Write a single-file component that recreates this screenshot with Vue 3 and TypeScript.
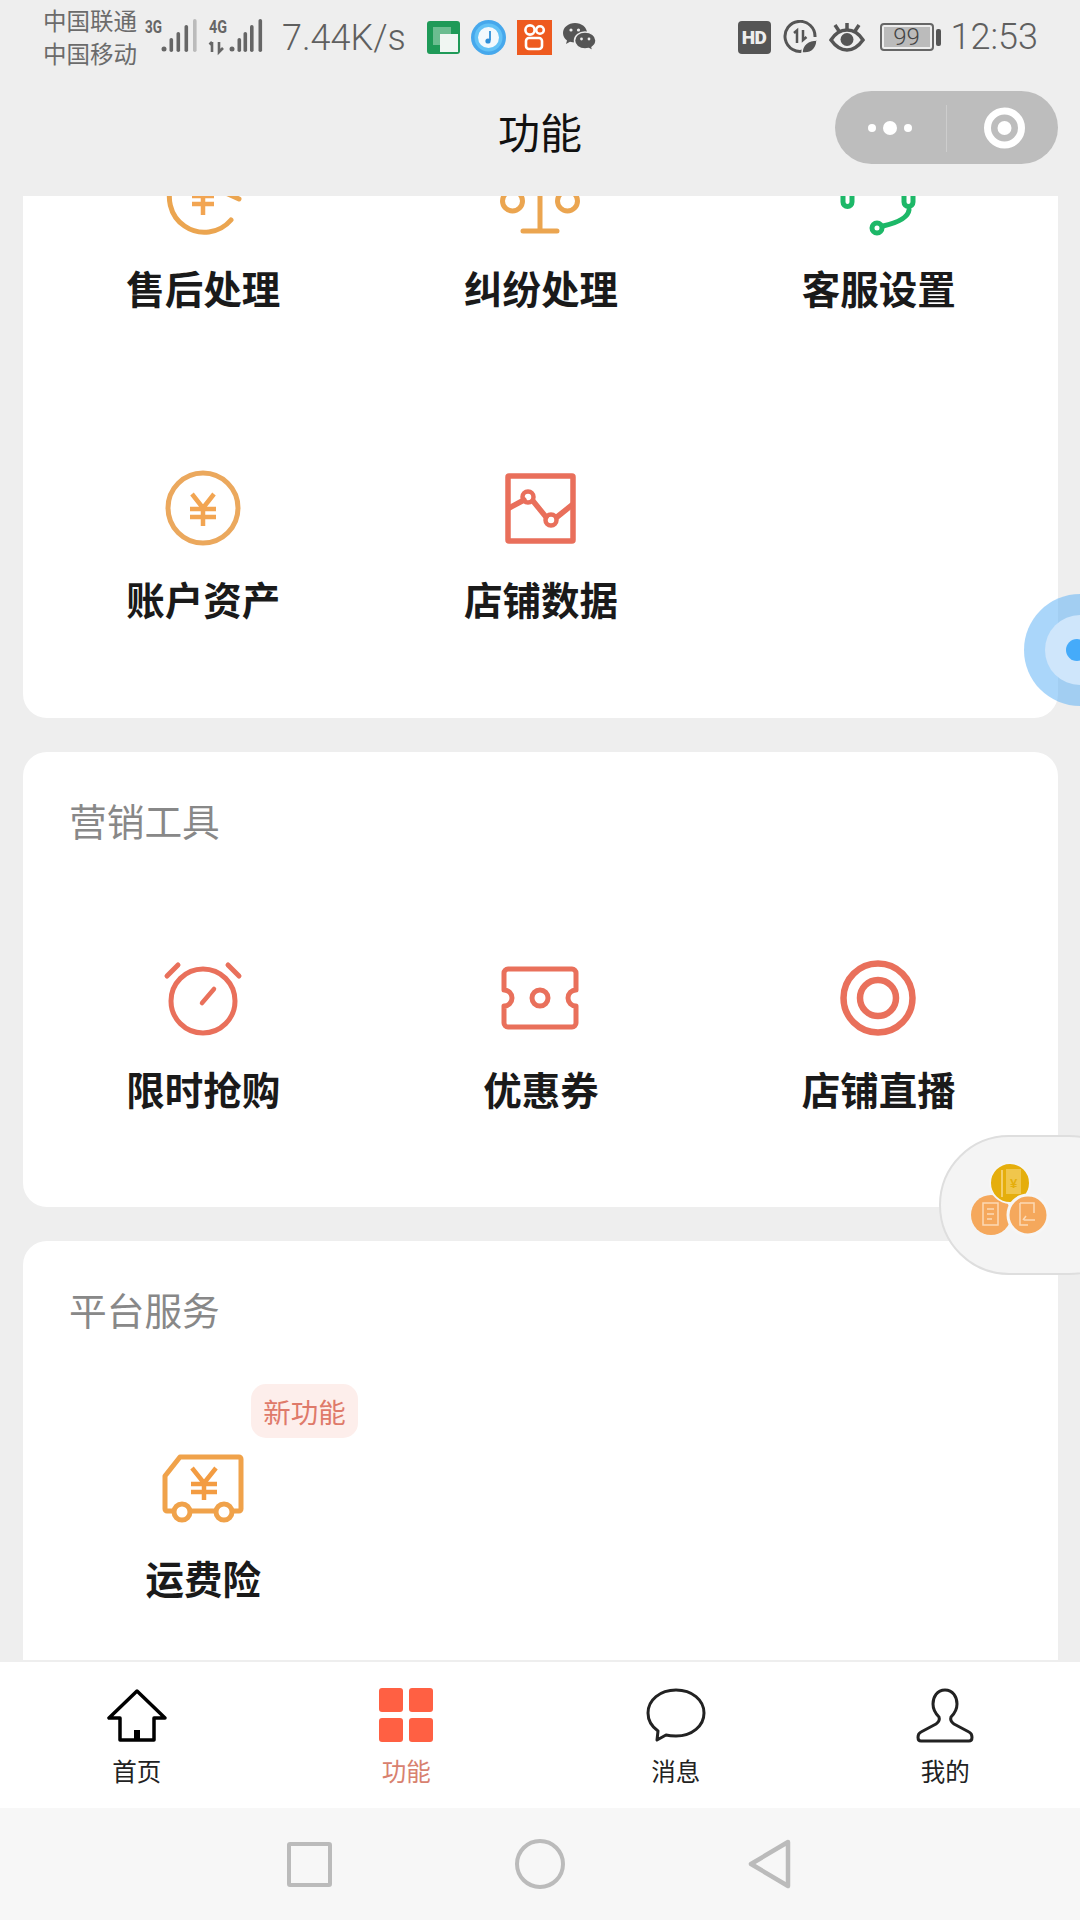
<template>
  <div class="page">
    <div class="status">
      <div class="carrier">
        <div>中国联通</div>
        <div>中国移动</div>
      </div>
      <svg class="signal-a" width="54" height="44" viewBox="0 0 54 44">
        <text x="1" y="19" class="net" textLength="17" lengthAdjust="spacingAndGlyphs">3G</text>
        <circle cx="20" cy="35" r="2.5" fill="#666" />
        <rect x="25.5" y="24" width="3.6" height="14" rx="1.8" fill="#666" />
        <rect x="32.5" y="18" width="3.6" height="20" rx="1.8" fill="#666" />
        <rect x="40.5" y="11" width="3.6" height="27" rx="1.8" fill="#666" />
        <rect x="49" y="5" width="3.6" height="33" rx="1.8" fill="#bbb" />
      </svg>
      <svg class="signal-b" width="56" height="44" viewBox="0 0 56 44">
        <text x="1" y="19" class="net" textLength="18" lengthAdjust="spacingAndGlyphs">4G</text>
        <path d="M4 38V28M1.500 30.500 4 28M11 28v10l4-4" fill="none" stroke="#666" stroke-width="2.600" />
        <circle cx="24" cy="35" r="2.5" fill="#666" />
        <rect x="29.5" y="24" width="3.6" height="14" rx="1.8" fill="#666" />
        <rect x="35.5" y="18" width="3.6" height="20" rx="1.8" fill="#666" />
        <rect x="42" y="11" width="3.6" height="27" rx="1.8" fill="#666" />
        <rect x="50.5" y="5" width="3.6" height="33" rx="1.8" fill="#666" />
      </svg>
      <span class="speed">7.44K/s</span>
      <div class="apps">
        <svg width="33" height="33" viewBox="0 0 33 33">
          <rect width="33" height="33" rx="3" fill="#1f9a58" />
          <rect x="6" y="6" width="18" height="18" fill="#6bbd90" />
          <rect x="13" y="13" width="18" height="18" fill="#f0f6f2" />
        </svg>
        <svg width="35" height="35" viewBox="0 0 35 35">
          <circle cx="17.5" cy="17.5" r="17.5" fill="#46a8ec" />
          <circle cx="17.5" cy="17.5" r="14" fill="#62c2f6" />
          <circle cx="17.5" cy="17.5" r="10.5" fill="#f2f9fd" />
          <path d="M19 11v9.5" stroke="#2f8fd8" stroke-width="1.8" />
          <circle cx="17" cy="21" r="2.6" fill="#2f8fd8" />
        </svg>
        <svg width="35" height="35" viewBox="0 0 35 35">
          <rect width="35" height="35" fill="#ee5a1f" />
          <g fill="none" stroke="#fff" stroke-width="2.6">
            <circle cx="13" cy="10" r="4.6" />
            <circle cx="23" cy="10" r="3.8" />
            <rect x="9" y="18" width="16" height="11" rx="3" />
          </g>
        </svg>
        <svg width="33" height="28" viewBox="0 0 33 28">
          <path d="M12 0C5.400 0 0 4.400 0 10c0 3 1.600 5.600 4 7.400L3 21l4-2.200c1.600.5 3.300.8 5 .8 6.600 0 12-4.400 12-9.800S18.600 0 12 0Z" fill="#555" />
          <path d="M22 9c-6 0-10.500 3.800-10.500 8.500S16 26 22 26c1.300 0 2.600-.2 3.700-.5L30 28l-1-3.700c2.400-1.600 4-4 4-6.800C33 12.800 28 9 22 9Z" fill="#555" stroke="#eee" stroke-width="1.500" />
          <g fill="#eee">
            <circle cx="8" cy="7" r="1.600" />
            <circle cx="15.500" cy="7" r="1.600" />
            <circle cx="18.500" cy="16" r="1.400" />
            <circle cx="26" cy="16" r="1.400" />
          </g>
        </svg>
      </div>
      <div class="sys">
        <div class="hd">HD</div>
        <svg width="34" height="34" viewBox="0 0 34 34">
          <path d="M22 30.500A15 15 0 1 1 32 17" fill="none" stroke="#555" stroke-width="3" />
          <path d="M11 13l3-2.500V23M20 10v10l3.500-3" fill="none" stroke="#555" stroke-width="2.500" />
          <path d="M19 33c0-8 6-13 15-13 0 8-5 13-12 13Z" fill="#555" stroke="#eee" stroke-width="1.500" />
        </svg>
        <svg width="36" height="30" viewBox="0 0 36 30">
          <path d="M2 18C7 10 12 8 18 8s11 2 16 10c-5 7-10 10-16 10S7 25 2 18Z" fill="none" stroke="#555" stroke-width="3.500" />
          <circle cx="18" cy="17.500" r="6.500" fill="#555" />
          <path d="M18 1v6M6 3l4 6M30 3l-4 6" stroke="#555" stroke-width="3.500" />
        </svg>
        <div class="battery">
          <div class="battery-body">99</div>
          <div class="battery-nub"></div>
        </div>
        <span class="clock">12:53</span>
      </div>
    </div>

    <div class="nav">
      <div></div>
      <div class="nav-title">功能</div>
      <svg class="capsule" width="223" height="73" viewBox="0 0 223 73">
        <rect width="223" height="73" rx="36.500" fill="#bdbdbd" />
        <circle cx="37" cy="37" r="4" fill="#fff" />
        <circle cx="55" cy="37" r="7" fill="#fff" />
        <circle cx="73" cy="37" r="4" fill="#fff" />
        <rect x="111" y="14" width="1" height="47" fill="#cdcdcd" />
        <circle cx="169.500" cy="37" r="17" fill="none" stroke="#fff" stroke-width="7" />
        <circle cx="169.500" cy="37" r="7" fill="#fff" />
      </svg>
    </div>

    <div class="scroll">
      <div class="scroll-inner">
        <section v-for="section in sections" :key="section.key" class="card" :class="{ 'card--cut': !section.title }">
          <div v-if="section.title" class="card-title">{{ section.title }}</div>
          <div class="grid">
            <div v-for="item in section.items" :key="item.label" class="item">
              <svg class="item-icon" width="80" height="80" viewBox="0 0 80 80" fill="none" stroke-linecap="round" stroke-linejoin="round">
                <g v-if="item.icon === 'refund'" stroke="#eba550" stroke-width="5">
                  <path d="M68 63A35 35 0 1 1 55 8" />
                  <path d="M65 37l11 5" />
                  <path d="M30 25l10 13 10-13M29 39h22M29 47h22M40 38v20" stroke="#f2a552" stroke-width="4.500" stroke-linecap="butt" />
                </g>
                <g v-else-if="item.icon === 'scale'" stroke="#eba550" stroke-width="5">
                  <path d="M12 18h56M40 8v66M23 74h34" />
                  <circle cx="12.500" cy="44" r="10" />
                  <circle cx="67.500" cy="44" r="10" />
                </g>
                <g v-else-if="item.icon === 'service'" stroke="#1db868" stroke-width="5">
                  <path d="M9 30C9-8 71-8 71 30" />
                  <path d="M5 36v9a4.500 4.500 0 0 0 9 0v-9M66 36v9a4.500 4.500 0 0 0 9 0v-9" />
                  <path d="M71 53C70 61 58 66 45 69" />
                  <circle cx="39" cy="71" r="5" />
                </g>
                <g v-else-if="item.icon === 'coin'">
                  <circle cx="40" cy="40" r="35" stroke="#eba85d" stroke-width="5" />
                  <path d="M29 26l11 14 11-14M27 41h26M27 49h26M40 40v18" stroke="#f2a552" stroke-width="4.500" stroke-linecap="butt" />
                </g>
                <g v-else-if="item.icon === 'chart'" stroke="#e96f5b" stroke-width="5.500">
                  <rect x="8" y="8" width="65" height="65" rx="1" />
                  <path d="M9 40l15-8M33 33l13 16M57 49l15-12" />
                  <circle cx="28" cy="29" r="5.500" stroke-width="4.500" />
                  <circle cx="51" cy="52" r="5.500" stroke-width="4.500" />
                </g>
                <g v-else-if="item.icon === 'alarm'" stroke="#e9705b" stroke-width="5">
                  <circle cx="40" cy="43" r="32" />
                  <path d="M4 18 15 7M65 7l11 11" />
                  <path d="M39 45l12-14" stroke-width="4.500" />
                </g>
                <g v-else-if="item.icon === 'coupon'" stroke="#e9705b" stroke-width="5">
                  <path d="M8 11h64a4 4 0 0 1 4 4v17a8 8 0 0 0 0 16v17a4 4 0 0 1-4 4H8a4 4 0 0 1-4-4V48a8 8 0 0 0 0-16V15a4 4 0 0 1 4-4Z" />
                  <circle cx="40" cy="40" r="8" />
                </g>
                <g v-else-if="item.icon === 'live'" stroke="#e9705b" stroke-width="6.500">
                  <circle cx="40" cy="40" r="34.500" />
                  <circle cx="40" cy="40" r="18" />
                </g>
                <g v-else-if="item.icon === 'truck'" stroke="#f0a24a" stroke-width="5">
                  <path d="M10 64H4a2 2 0 0 1-2-2V29L17 10h59a2 2 0 0 1 2 2v50a2 2 0 0 1-2 2h-7M27 64h26" />
                  <circle cx="19" cy="65" r="8" fill="#fff" />
                  <circle cx="61" cy="65" r="8" fill="#fff" />
                  <path d="M29 21l12 15 12-15M28 37h26M28 45h26M41 36v17" stroke="#f39c42" stroke-width="4.500" stroke-linecap="butt" />
                </g>
              </svg>
              <div class="item-label">{{ item.label }}</div>
              <span v-if="item.badge" class="badge">{{ item.badge }}</span>
            </div>
          </div>
        </section>
      </div>
    </div>

    <div class="tabbar">
      <div v-for="tab in tabs" :key="tab.key" class="tab" :class="{ 'tab--on': tab.key === 'func' }">
        <svg width="60" height="56" viewBox="0 0 60 56" fill="none" stroke-linejoin="round">
          <g v-if="tab.key === 'home'" stroke="#000" stroke-width="3.500">
            <path d="M30 3 2 30h11v22h34V30h11Z" />
            <rect x="27" y="42" width="6" height="10" fill="#000" stroke="none" />
          </g>
          <g v-else-if="tab.key === 'func'" fill="#ff6043">
            <rect x="3" y="0" width="24" height="24" rx="3" />
            <rect x="33" y="0" width="24" height="24" rx="3" />
            <rect x="3" y="30" width="24" height="24" rx="3" />
            <rect x="33" y="30" width="24" height="24" rx="3" />
          </g>
          <path v-else-if="tab.key === 'msg'" d="M11 52 12 43C5 38 2 32 2 25 2 12 14 2 30 2S58 12 58 25 46 48 30 48C26 48 22 47.500 20 47Z" stroke="#222" stroke-width="3" />
          <path v-else d="M30 2C22 2 18 9 18 16 18 22 21 26 24 29 25 32 24 34 21 36L6 44C2 46 2 53 6 53H54C58 53 58 46 54 44L39 36C36 34 35 32 36 29 39 26 42 22 42 16 42 9 38 2 30 2Z" stroke="#222" stroke-width="3" />
        </svg>
        <div class="tab-label">{{ tab.label }}</div>
      </div>
    </div>

    <div class="sysnav">
      <div class="sysnav-square"></div>
      <div class="sysnav-circle"></div>
      <svg width="50" height="50" viewBox="0 0 50 50">
        <path d="M43 3 6 25 43 47Z" fill="none" stroke="#bbb" stroke-width="4.500" stroke-linejoin="round" />
      </svg>
    </div>

    <div class="float-blue">
      <div class="float-blue-mid"></div>
      <div class="float-blue-dot"></div>
    </div>
    <div class="float-pill">
      <svg width="100" height="100" viewBox="0 0 100 100">
        <circle cx="41" cy="65" r="20" fill="#f5a85c" />
        <circle cx="60" cy="33" r="20" fill="#e5ae0c" stroke="#f6f6f6" stroke-width="2" />
        <circle cx="78" cy="65" r="20" fill="#f5a85c" stroke="#f6f6f6" stroke-width="3" />
        <g fill="none" stroke="#f8d98a" stroke-width="1.500">
          <path d="M52 20v27" />
          <rect x="56" y="19" width="15" height="25" fill="#f0c64c" stroke="none" />
        </g>
        <text x="63.500" y="38" class="pill-yuan">¥</text>
        <g fill="none" stroke="#fbd9b5" stroke-width="1.500">
          <path d="M33 53h15v22H33ZM37 59h7M37 64h7M37 69h5" />
          <path d="M70 53h14v10M70 53v22h8M74 70h11M76 66l-3 4" />
        </g>
      </svg>
    </div>
  </div>
</template>

<script setup lang="ts">
interface Item {
  label: string;
  icon: string;
  badge?: string;
}

interface Section {
  key: string;
  title: string;
  items: Item[];
}

const sections: Section[] = [
  {
    key: 'shop',
    title: '',
    items: [
      { label: '售后处理', icon: 'refund' },
      { label: '纠纷处理', icon: 'scale' },
      { label: '客服设置', icon: 'service' },
      { label: '账户资产', icon: 'coin' },
      { label: '店铺数据', icon: 'chart' },
    ],
  },
  {
    key: 'market',
    title: '营销工具',
    items: [
      { label: '限时抢购', icon: 'alarm' },
      { label: '优惠券', icon: 'coupon' },
      { label: '店铺直播', icon: 'live' },
    ],
  },
  {
    key: 'platform',
    title: '平台服务',
    items: [{ label: '运费险', icon: 'truck', badge: '新功能' }],
  },
];

const tabs = [
  { key: 'home', label: '首页' },
  { key: 'func', label: '功能' },
  { key: 'msg', label: '消息' },
  { key: 'mine', label: '我的' },
];
</script>

<style>
html,
body {
  margin: 0;
  background: #eeeeee;
}
</style>

<style scoped>
.page {
  position: relative;
  width: 1080px;
  height: 1920px;
  display: flex;
  flex-direction: column;
  overflow: hidden;
  background: #eeeeee;
  font-family: "Noto Sans CJK SC", "Noto Sans", sans-serif;
}

.status {
  height: 70px;
  display: flex;
  align-items: center;
  padding: 0 42px 0 43px;
  color: #666;
  flex-shrink: 0;
}
.carrier {
  width: 101px;
  font-size: 23.500px;
  line-height: 33px;
  color: #6b6b6b;
  margin-top: 4px;
}
.signal-a {
  margin-top: 2px;
}
.signal-b {
  margin: 2px 0 0 10px;
}
.net {
  font-family: "Roboto", sans-serif;
  font-weight: 700;
  font-size: 18px;
  fill: #666;
}
.speed,
.clock {
  font-family: "Roboto", sans-serif;
  font-weight: 300;
  font-size: 36px;
  line-height: 44px;
  color: #5f5f5f;
  white-space: nowrap;
}
.speed {
  width: 124px;
  margin: 5px 0 0 18px;
}
.apps {
  display: flex;
  align-items: center;
  gap: 11px;
  margin: 4px 0 0 21px;
}
.sys {
  display: flex;
  align-items: center;
  gap: 12px;
  margin: 4px 0 0 auto;
}
.clock {
  margin-left: -2px;
}
.hd {
  width: 33px;
  height: 33px;
  border-radius: 4px;
  background: #555;
  color: #eee;
  font-family: "Roboto", sans-serif;
  font-weight: 900;
  font-size: 19px;
  line-height: 33px;
  text-align: center;
  letter-spacing: -0.5px;
}
.battery {
  display: flex;
  align-items: center;
  gap: 2px;
  margin-left: 3px;
}
.battery-body {
  width: 54px;
  height: 28px;
  box-sizing: border-box;
  border: 2px solid #666;
  border-radius: 4px;
  background: #bbbbbb;
  background-clip: content-box;
  padding: 2px;
  font-family: "Roboto", sans-serif;
  font-weight: 300;
  font-size: 24px;
  line-height: 20px;
  text-align: center;
  color: #444;
}
.battery-nub {
  width: 5px;
  height: 17px;
  border-radius: 2px;
  background: #555;
}

.nav {
  height: 126px;
  flex-shrink: 0;
  display: grid;
  grid-template-columns: 1fr auto 1fr;
  align-items: center;
  padding-right: 22px;
}
.nav-title {
  font-size: 42px;
  line-height: 56px;
  color: #111;
  padding-left: 22px;
  margin-bottom: 4px;
}
.capsule {
  justify-self: end;
  margin-bottom: 11px;
}

.scroll {
  flex: 1;
  min-height: 0;
  overflow: hidden;
}
.scroll-inner {
  margin-top: -39px;
  padding: 0 22px 0 23px;
  display: flex;
  flex-direction: column;
  gap: 34px;
}
.card {
  background: #fff;
  border-radius: 24px;
  padding: 43px 11px 93px;
}
.card--cut {
  padding-top: 0;
  padding-bottom: 94px;
}
.card-title {
  height: 50px;
  margin: 0 0 113px 35px;
  font-size: 37.700px;
  line-height: 50px;
  color: #888;
}
.grid {
  display: grid;
  grid-template-columns: repeat(3, 1fr);
  row-gap: 155px;
}
.item {
  position: relative;
  height: 156px;
  display: flex;
  flex-direction: column;
  align-items: center;
}
.item-icon {
  display: block;
  flex-shrink: 0;
  overflow: visible;
}
.item-label {
  margin-top: 26px;
  padding-left: 1px;
  font-size: 38.500px;
  line-height: 48px;
  font-weight: 700;
  color: #1a1a1a;
  white-space: nowrap;
}
.badge {
  position: absolute;
  left: 217px;
  top: -63px;
  width: 107px;
  height: 54px;
  border-radius: 15px;
  background: #fdeeeb;
  color: #df7a6a;
  font-size: 27.500px;
  line-height: 54px;
  text-align: center;
}
.pill-yuan {
  font-family: "Liberation Sans", sans-serif;
  font-size: 13px;
  font-weight: 700;
  text-anchor: middle;
  fill: #e5ae0c;
}

.tabbar {
  height: 148px;
  box-sizing: border-box;
  flex-shrink: 0;
  display: grid;
  grid-template-columns: repeat(4, 1fr);
  background: #fff;
  border-top: 2px solid #eeeeee;
  padding: 26px 0 0 2px;
}
.tab {
  display: flex;
  flex-direction: column;
  align-items: center;
  gap: 11px;
}
.tab-label {
  font-size: 24.500px;
  line-height: 32px;
  color: #222;
}
.tab--on .tab-label {
  color: #d8816f;
}

.sysnav {
  height: 112px;
  flex-shrink: 0;
  display: flex;
  align-items: center;
  justify-content: center;
  gap: 180px;
  background: #f7f7f7;
}
.sysnav-square {
  width: 45px;
  height: 45px;
  margin: 0 3.500px 0 1.500px;
  box-sizing: border-box;
  border: 4.500px solid #bbb;
  border-radius: 3px;
}
.sysnav-circle {
  width: 50px;
  height: 50px;
  box-sizing: border-box;
  border: 4.500px solid #bbb;
  border-radius: 50%;
}

.float-blue {
  position: absolute;
  left: 1024px;
  top: 594px;
  width: 112px;
  height: 112px;
  border-radius: 50%;
  background: rgba(100, 180, 245, 0.55);
}
.float-blue-mid {
  position: absolute;
  left: 21px;
  top: 21px;
  width: 70px;
  height: 70px;
  border-radius: 50%;
  background: #cfe6fb;
}
.float-blue-dot {
  position: absolute;
  left: 42px;
  top: 45px;
  width: 22px;
  height: 22px;
  border-radius: 50%;
  background: #45abfa;
}
.float-pill {
  position: absolute;
  left: 939px;
  top: 1135px;
  width: 200px;
  height: 140px;
  box-sizing: border-box;
  border: 2px solid #dedede;
  border-radius: 70px;
  background: #f4f4f4;
  padding: 13px 0 0 9px;
}
.float-pill svg {
  display: block;
}
</style>
